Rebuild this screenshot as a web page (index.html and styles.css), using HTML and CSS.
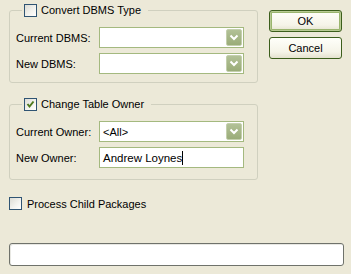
FILE: index.html
```html
<!DOCTYPE html>
<html lang="en">
<head>
    <meta charset="UTF-8">
    <title>Convert Package</title>
    <link rel="stylesheet" href="styles.css">
</head>
<body>

<div class="dialog">
    <div class="main">
        <!-- DBMS group -->
        <fieldset class="group group-dbms">
            <legend>
                <span class="check"><span class="box"></span>Convert DBMS Type</span>
            </legend>
            <div class="row">
                <span class="label">Current DBMS:</span>
                <div class="combo"><span class="value"></span><span class="drop"><svg width="16" height="17" viewBox="0 0 16 17"><polyline points="4.5,6.5 8,10 11.5,6.5" fill="none" stroke="#fff" stroke-width="2"/></svg></span></div>
            </div>
            <div class="row">
                <span class="label">New DBMS:</span>
                <div class="combo"><span class="value"></span><span class="drop"><svg width="16" height="17" viewBox="0 0 16 17"><polyline points="4.5,6.5 8,10 11.5,6.5" fill="none" stroke="#fff" stroke-width="2"/></svg></span></div>
            </div>
        </fieldset>

        <!-- Owner group -->
        <fieldset class="group group-owner">
            <legend>
                <span class="check"><span class="box checked"><svg width="11" height="11" viewBox="0 0 11 11"><polyline points="2.5,5 4.5,7.5 8.5,2.5" fill="none" stroke="#4f7a1e" stroke-width="2"/></svg></span>Change Table Owner</span>
            </legend>
            <div class="row">
                <span class="label">Current Owner:</span>
                <div class="combo"><span class="value">&lt;All&gt;</span><span class="drop"><svg width="16" height="17" viewBox="0 0 16 17"><polyline points="4.5,6.5 8,10 11.5,6.5" fill="none" stroke="#fff" stroke-width="2"/></svg></span></div>
            </div>
            <div class="row">
                <span class="label">New Owner:</span>
                <div class="edit"><span class="value">Andrew Loynes</span><span class="caret"></span></div>
            </div>
        </fieldset>

        <div class="check child">
            <span class="box"></span>Process Child Packages
        </div>
    </div>

    <div class="buttons">
        <button class="button default">OK</button>
        <button class="button">Cancel</button>
    </div>
</div>

<div class="status"></div>

</body>
</html>
```

FILE: styles.css
```css
body {
    margin: 0;
    padding: 0;
    background-color: #ece9d8;
    font-family: "Liberation Sans", Arial, sans-serif;
    font-size: 11px;
    color: #000;
}

.dialog {
    display: flex;
    gap: 11px;
    padding: 4px 0 0 9px;
}

.main {
    width: 249px;
}

.group {
    margin: 0;
    padding: 0 13px 8px 6px;
    border: 1px solid #d0d0bf;
    border-radius: 3px;
    min-width: 0;
}

.group legend {
    margin-left: 6px;
    padding: 0 7px 0 2px;
    height: 13px;
    line-height: 13px;
}

.group-owner {
    margin-top: 15px;
    padding-bottom: 11px;
}

.check {
    display: flex;
    align-items: center;
    gap: 4px;
    height: 13px;
    white-space: nowrap;
}

.box {
    width: 11px;
    height: 11px;
    border: 1px solid #2f5473;
    background: linear-gradient(135deg, #dcdcd5 0%, #f4f4f0 60%, #ffffff 100%);
    display: flex;
    align-items: center;
    justify-content: center;
    flex: none;
}

.box svg {
    display: block;
}

.row {
    display: flex;
    align-items: center;
    height: 21px;
    margin-top: 5px;
}

.row:first-of-type {
    margin-top: 10px;
}

.label {
    width: 83px;
    white-space: nowrap;
}

.combo,
.edit {
    display: flex;
    align-items: center;
    box-sizing: border-box;
    width: 145px;
    height: 21px;
    border: 1px solid #a4b97f;
    background-color: #fff;
    padding: 1px;
}

.value {
    flex: 1;
    padding-left: 2px;
    white-space: nowrap;
}

.edit .value {
    flex: none;
    padding-left: 2px;
    font-size: 11.5px;
}

.caret {
    width: 1px;
    height: 14px;
    background-color: #000;
}

.drop {
    width: 16px;
    height: 17px;
    box-sizing: border-box;
    border: 1px solid #c3cfac;
    border-radius: 2px;
    background: linear-gradient(#b2c197, #9aac78);
    display: flex;
    align-items: center;
    justify-content: center;
}

.drop svg {
    display: block;
    margin: -1px;
}

.child {
    margin-top: 17px;
    gap: 5px;
}

.buttons {
    display: flex;
    flex-direction: column;
    gap: 5px;
    padding-top: 6px;
}

.button {
    width: 73px;
    height: 22px;
    padding: 0;
    border: 1px solid #3c5e1c;
    border-radius: 3px;
    background: linear-gradient(#fffffa, #f5f4e8 70%, #e4e2cf);
    font-family: inherit;
    font-size: 11px;
    color: #000;
}

.button.default {
    box-shadow: inset 0 0 0 1px #b8cb94, inset 0 0 0 2px #9ab56e;
}

.status {
    box-sizing: border-box;
    width: 335px;
    height: 23px;
    margin: 33px 0 0 9px;
    border: 1px solid #6f726b;
    border-radius: 3px;
    background-color: #fff;
    box-shadow: inset 1px 1px 0 #e8e8e3;
}
```
